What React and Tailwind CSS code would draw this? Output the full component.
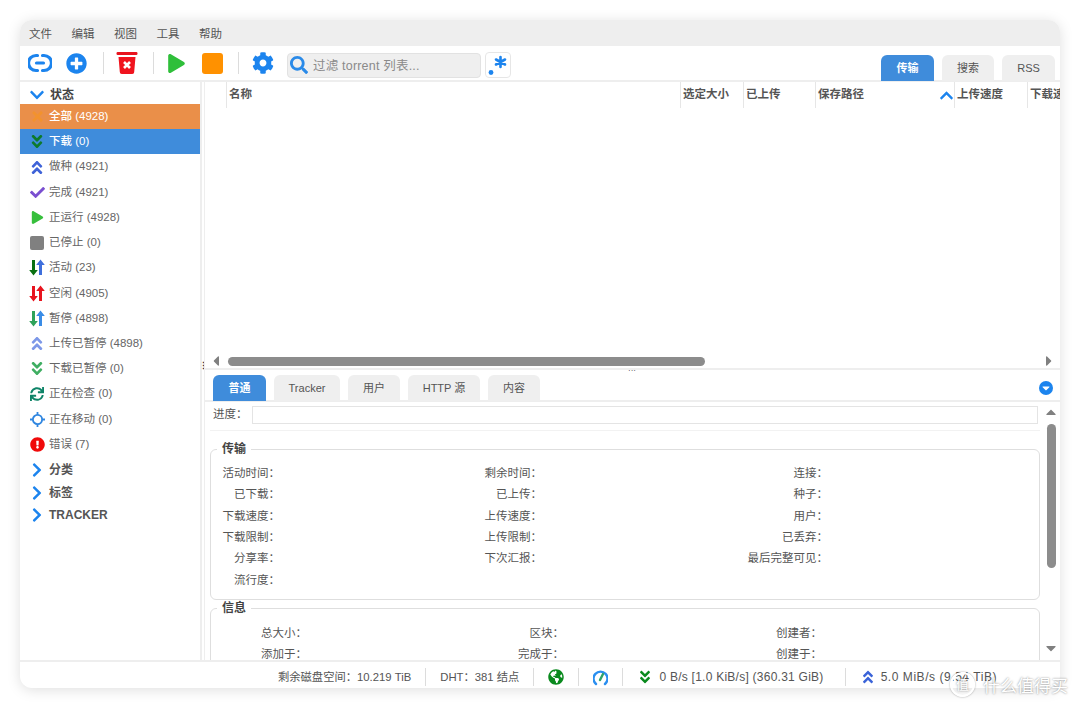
import { FaAngleDoubleDown, FaAngleDoubleUp, FaCaretDown, FaCaretLeft, FaCaretRight, FaCaretUp, FaCheck, FaChevronDown, FaChevronRight, FaChevronUp, FaCog, FaExclamationCircle, FaGlobeAmericas, FaPlay, FaPlusCircle, FaSearch, FaSync, FaTimes } from 'react-icons/fa'

const fontStack = 'font-["Liberation_Sans","Noto_Sans_CJK_SC",sans-serif]'

const LinkIcon = () => (
  <svg width="24" height="20" viewBox="0 0 24 20" fill="none" stroke="#1c84ee" strokeWidth="3.2" strokeLinecap="round">
    <path d="M9.500 2.500H8a7.500 7.500 0 0 0 0 15h1.500" />
    <path d="M14.500 2.500H16a7.500 7.500 0 0 1 0 15h-1.500" />
    <path d="M8.500 10h7" />
  </svg>
)

const TrashIcon = () => (
  <svg width="22" height="22" viewBox="0 0 22 22">
    <rect x="0.500" y="0" width="21" height="3" rx="1.200" fill="#e8141e" />
    <path d="M2.500 5h17l-1.300 15a2 2 0 0 1-2 2H5.800a2 2 0 0 1-2-2z" fill="#f0141e" />
    <path d="M8 10l6 6m0-6l-6 6" stroke="#fff" strokeWidth="2.600" />
  </svg>
)

const RegexIcon = () => (
  <svg width="20" height="22" viewBox="0 0 20 22" stroke="#1c84ee" strokeWidth="2.600" strokeLinecap="round">
    <circle cx="3" cy="18.500" r="2.400" fill="#1c84ee" stroke="none" />
    <path d="M12.500 3v10M8 5.500l9 5M17 5.500l-9 5" />
  </svg>
)

const MoveIcon = () => (
  <svg width="15" height="15" viewBox="0 0 15 15" fill="none" stroke="#2f86e0" strokeWidth="1.800">
    <circle cx="7.500" cy="7.500" r="4.600" />
    <path d="M7.500 0v3M7.500 12v3M0 7.500h3M12 7.500h3" />
  </svg>
)

const GaugeIcon = () => (
  <svg width="15" height="18" viewBox="0 0 15 18" fill="none" strokeLinecap="round">
    <path d="M3 16a7 7 0 1 1 9 0" stroke="#2a8ff0" strokeWidth="2.400" />
    <path d="M7 12l3-6" stroke="#2fa36a" strokeWidth="2.400" />
  </svg>
)

const ArrowPair = ({ left, right }) => (
  <svg width="16" height="17" viewBox="0 0 16 17">
    <path d="M3 1h3v10h2.800L4.500 16.500 0.200 11H3z" fill={left} />
    <path d="M10 16h3V6h2.800L11.500 0.500 7.200 6H10z" fill={right} />
  </svg>
)

const filters = [
  { label: '全部 (4928)', icon: <FaTimes size={15} color="#f2922e" />, tone: 'bg-[#ea8f49] text-white' },
  { label: '下载 (0)', icon: <FaAngleDoubleDown size={17} color="#0d7a2b" />, tone: 'bg-[#3f8cdb] text-white' },
  { label: '做种 (4921)', icon: <FaAngleDoubleUp size={17} color="#3f63d8" /> },
  { label: '完成 (4921)', icon: <FaCheck size={15} color="#7a4fd0" /> },
  { label: '正运行 (4928)', icon: <FaPlay size={13} color="#37bf3c" /> },
  { label: '已停止 (0)', icon: <span className="block h-[14px] w-[14px] rounded-[2px] bg-[#808080]" /> },
  { label: '活动 (23)', icon: <ArrowPair left="#0a7012" right="#3f6fdc" /> },
  { label: '空闲 (4905)', icon: <ArrowPair left="#e8141e" right="#e8141e" /> },
  { label: '暂停 (4898)', icon: <ArrowPair left="#2fa35a" right="#3a8ce6" /> },
  { label: '上传已暂停 (4898)', icon: <FaAngleDoubleUp size={17} color="#7d98e8" /> },
  { label: '下载已暂停 (0)', icon: <FaAngleDoubleDown size={17} color="#3fae62" /> },
  { label: '正在检查 (0)', icon: <FaSync size={14} color="#0f8468" /> },
  { label: '正在移动 (0)', icon: <MoveIcon /> },
  { label: '错误 (7)', icon: <FaExclamationCircle size={15} color="#f00a0a" /> },
]

const columns = [
  { label: '', width: 'w-[22px]' },
  { label: '名称', width: 'w-[454px]' },
  { label: '选定大小', width: 'w-[63px]' },
  { label: '已上传', width: 'w-[72px]' },
  { label: '保存路径', width: 'w-[139px]', sorted: true },
  { label: '上传速度', width: 'w-[73px]' },
  { label: '下载速度', width: 'w-[32px]' },
]

const Separator = ({ className = '' }) => <span className={`w-px bg-[#dcdcdc] ${className}`} />

const Tab = ({ label, width, active }) => (
  <div className={`-mb-px flex h-[26px] items-center justify-center rounded-t-[6px] pt-px text-[11px] ${width} ${active ? 'bg-[#3f8cdb] font-bold text-white' : 'bg-[#efefef] text-[#555]'}`}>
    {label}
  </div>
)

const InfoRow = ({ cells, widths }) => (
  <div className="flex h-[21.300px] items-center text-[11.500px] text-[#555]">
    {cells.map((cell, i) => (
      <span key={i} className={`shrink-0 text-right ${widths[i]}`}>{cell}</span>
    ))}
  </div>
)

const Group = ({ title, rows, widths, className, bodyClass }) => (
  <fieldset className={`rounded-[6px] border border-[#dedede] px-0 ${className}`}>
    <legend className="ml-[6px] px-[5px] text-[12px] font-bold text-[#444]">{title}</legend>
    <div className={bodyClass}>
      {rows.map((cells) => <InfoRow key={cells[0] + cells[1]} cells={cells} widths={widths} />)}
    </div>
  </fieldset>
)

export default function App() {
  return (
    <div className={`relative h-[709px] w-[1080px] overflow-hidden bg-white px-[20px] pt-[20px] ${fontStack}`}>
      <div className="flex h-[668px] flex-col overflow-hidden rounded-[12px] bg-white shadow-[0_2px_14px_rgba(0,0,0,0.13)]">
        {/* menu */}
        <div className="flex h-[26px] shrink-0 items-center gap-[18.500px] bg-[#eeeeee] pl-[9px] pt-[3px] text-[11.500px] text-[#555]">
          {['文件', '编辑', '视图', '工具', '帮助'].map((m) => <span key={m} className="w-[24px]">{m}</span>)}
        </div>

        {/* toolbar */}
        <div className="flex h-[36px] shrink-0 items-center border-b-2 border-[#eeeeee] pl-[2px]">
          <span className="flex w-[36px] justify-center"><LinkIcon /></span>
          <span className="flex w-[36px] justify-center"><FaPlusCircle size={21} color="#1c84ee" /></span>
          <Separator className="ml-[9px] h-[22px]" />
          <span className="ml-[5px] flex w-[36px] justify-center"><TrashIcon /></span>
          <Separator className="ml-[8px] h-[22px]" />
          <span className="ml-[4px] flex w-[36px] justify-center"><FaPlay size={19} color="#2fbf3a" /></span>
          <span className="flex w-[36px] justify-center"><span className="h-[21px] w-[21px] rounded-[3px] bg-[#ff9100]" /></span>
          <Separator className="ml-[8px] h-[22px]" />
          <span className="ml-[6px] flex w-[36px] justify-center"><FaCog size={22} color="#1c84ee" /></span>
          <div className="ml-[6px] mt-[4px] flex h-[25px] w-[194px] items-center gap-[5px] rounded-[4px] border border-[#e2e2e2] bg-[#efefef] pl-[2px] text-[12.500px] tracking-[0.2px] text-[#8a8a8a]">
            <FaSearch size={18} color="#2a8ae8" />
            <span className="pt-[2px]">过滤 torrent 列表...</span>
          </div>
          <div className="ml-[4px] mt-[4px] flex h-[26px] w-[26px] items-center justify-center rounded-[4px] border border-[#e6e6e6]"><RegexIcon /></div>
          <div className="ml-auto flex items-end gap-[8px] self-end pr-[5px]">
            <Tab label="传输" width="w-[53px]" active />
            <Tab label="搜索" width="w-[52px]" />
            <Tab label="RSS" width="w-[53px]" />
          </div>
        </div>

        <div className="flex min-h-0 flex-1">
          {/* sidebar */}
          <aside className="w-[182px] shrink-0 border-r-2 border-[#eeeeee] text-[11.500px] text-[#666]">
            <div className="flex h-[22px] items-center gap-[5px] pl-[9px] pt-[3px] text-[12px] font-bold text-[#444]">
              <FaChevronDown size={16} color="#1c84ee" />
              <span>状态</span>
            </div>
            {filters.map((f) => (
              <div key={f.label} className={`flex h-[25.230px] items-center gap-[4px] pl-[9px] ${f.tone ?? ''}`}>
                <span className="flex w-[16px] justify-center">{f.icon}</span>
                <span className={f.tone ? 'font-medium' : ''}>{f.label}</span>
              </div>
            ))}
            <div className="pt-[2px]">
              {['分类', '标签', 'TRACKER'].map((g) => (
                <div key={g} className="flex h-[22.500px] items-center gap-[4px] pl-[9px] text-[12px] font-bold text-[#555]">
                  <FaChevronRight size={16} color="#1c84ee" />
                  <span>{g}</span>
                </div>
              ))}
            </div>
          </aside>

          {/* resize handle */}
          <div className="flex w-[2px] shrink-0 flex-col items-center pt-[282px]">
            <span className="text-[9px] font-bold leading-[4px] text-[#333]">⋮</span>
          </div>

          <main className="flex min-w-0 flex-1 flex-col border-l border-[#eeeeee]">
            {/* torrent table */}
            <div className="flex h-[26px] shrink-0 overflow-hidden text-[11.500px] font-bold text-[#555]">
              {columns.map((c) => (
                <div key={c.label} className={`flex shrink-0 items-center whitespace-nowrap border-r border-[#e6e6e6] pl-[2px] ${c.width} last:border-r-0`}>
                  <span>{c.label}</span>
                  {c.sorted && <FaChevronUp size={15} color="#1c84ee" className="ml-auto" />}
                </div>
              ))}
            </div>
            <div className="h-[246px] shrink-0" />
            <div className="flex h-[14px] shrink-0 items-center pl-[3px] text-[#808080]">
              <FaCaretLeft size={16} />
              <span className="ml-[4px] h-[9px] w-[477px] rounded-full bg-[#8c8c8c]" />
              <span className="ml-auto mr-[3px]"><FaCaretRight size={16} /></span>
            </div>

            {/* properties */}
            <div className="relative flex h-[34px] shrink-0 items-end gap-[8px] border-y-2 border-[#eeeeee] pl-[8px]">
              <Tab label="普通" width="w-[53px]" active />
              <Tab label="Tracker" width="w-[66px]" />
              <Tab label="用户" width="w-[52px]" />
              <Tab label="HTTP 源" width="w-[72px]" />
              <Tab label="内容" width="w-[52px]" />
              <span className="absolute left-[423px] top-[-1px] text-[8px] leading-[4px] text-[#333]">···</span>
              <span className="absolute right-[7px] top-[11px] flex h-[14px] w-[14px] items-center justify-center rounded-full bg-[#1c84ee]">
                <FaCaretDown size={12} color="#fff" />
              </span>
            </div>

            <div className="flex min-h-0 flex-1">
              <div className="min-w-0 flex-1 overflow-hidden pl-[5px]">
                <div className="flex h-[29px] items-center gap-[13px] border-b border-[#f2f2f2] pb-[3px] pl-[3px] pr-[2px] text-[11.500px] text-[#555]">
                  <span className="w-[26px] whitespace-nowrap pt-[1px]">进度：</span>
                  <span className="h-[18px] flex-1 border border-[#e4e4e4]" />
                </div>
                <Group
                  title="传输"
                  className="mt-[9px] h-[160px]"
                  bodyClass="pt-[5px]"
                  widths={['w-[69px]', 'w-[262px]', 'w-[286px]']}
                  rows={[
                    ['活动时间：', '剩余时间：', '连接：'],
                    ['已下载：', '已上传：', '种子：'],
                    ['下载速度：', '上传速度：', '用户：'],
                    ['下载限制：', '上传限制：', '已丢弃：'],
                    ['分享率：', '下次汇报：', '最后完整可见：'],
                    ['流行度：', '', ''],
                  ]}
                />
                <Group
                  title="信息"
                  className="-mt-[1px]"
                  bodyClass="pt-[6px]"
                  widths={['w-[96px]', 'w-[257px]', 'w-[258px]']}
                  rows={[
                    ['总大小：', '区块：', '创建者：'],
                    ['添加于：', '完成于：', '创建于：'],
                  ]}
                />
              </div>
              {/* vertical scrollbar */}
              <div className="flex w-[20px] shrink-0 flex-col items-center pl-[2px] text-[#808080]">
                <FaCaretUp size={16} className="mt-[2px]" />
                <span className="mt-[4px] h-[144px] w-[9px] rounded-full bg-[#8c8c8c]" />
                <FaCaretDown size={16} className="mt-auto mb-[4px]" />
              </div>
            </div>
          </main>
        </div>

        {/* status bar */}
        <div className="flex h-[28px] shrink-0 items-center justify-end border-t-2 border-[#eeeeee] pr-[63px] pt-[4px] text-[11.300px] text-[#555]">
          <span>剩余磁盘空间：10.219 TiB</span>
          <Separator className="mx-[14px] h-[18px]" />
          <span>DHT：381 结点</span>
          <Separator className="mx-[14px] h-[18px]" />
          <FaGlobeAmericas size={16} color="#0a8a1e" />
          <Separator className="mx-[14px] h-[18px]" />
          <GaugeIcon />
          <Separator className="mx-[14px] h-[18px]" />
          <FaAngleDoubleDown size={16} color="#0a8a1e" />
          <span className="ml-[6px] text-[12px] tracking-[0.25px]">0 B/s [1.0 KiB/s] (360.31 GiB)</span>
          <Separator className="ml-[21px] mr-[14px] h-[18px]" />
          <FaAngleDoubleUp size={16} color="#3a63d8" />
          <span className="ml-[5px] text-[12px] tracking-[0.55px]">5.0 MiB/s (9.54 TiB)</span>
        </div>
      </div>

      {/* watermark */}
      <div className="absolute left-[950px] top-[672px] flex items-center gap-[8px] text-[17px] leading-none text-white [text-shadow:0_0_2px_rgba(0,0,0,0.5)]">
        <span className="flex h-[25px] w-[25px] items-center justify-center rounded-full border-2 border-white text-[13px] leading-none shadow-[0_0_2px_rgba(0,0,0,0.4)]">值</span>
        <span className="pt-[3px]">什么值得买</span>
      </div>
    </div>
  )
}
